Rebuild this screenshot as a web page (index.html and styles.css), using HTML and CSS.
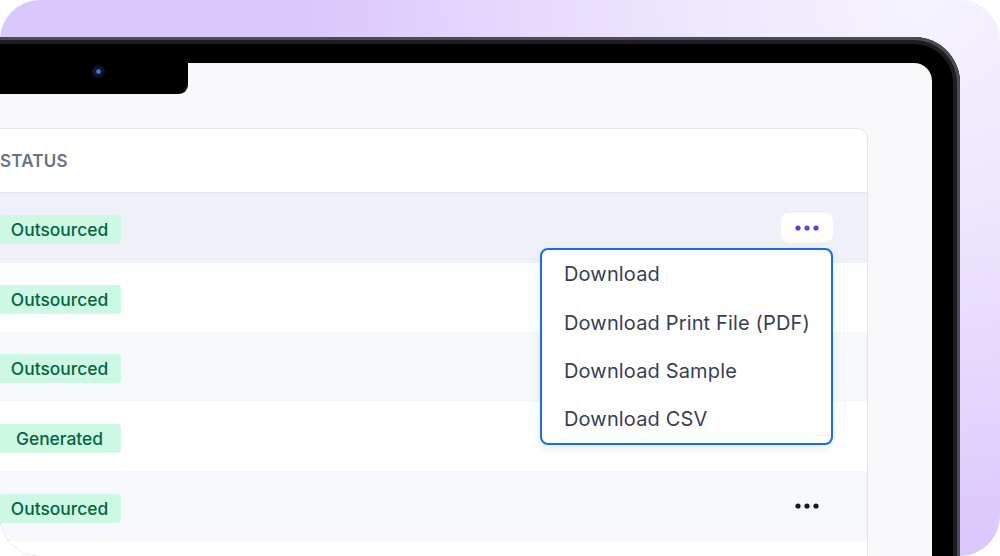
FILE: index.html
```html
<!DOCTYPE html>
<html lang="en">
<head>
<meta charset="utf-8">
<title>Table actions</title>
<link rel="stylesheet" href="styles.css">
</head>
<body>
<div class="stage">
  <div class="device">
    <div class="screen">
      <div class="notch"><span class="camera"></span></div>
      <div class="card">
        <div class="thead"><span class="th">Status</span></div>
        <div class="row row-hover">
          <span class="badge">Outsourced</span>
          <div class="actions">
            <button class="more more-active" type="button" aria-label="More">
              <svg width="24" height="6" viewBox="0 0 24 6"><circle cx="3" cy="3" r="2.6"/><circle cx="12" cy="3" r="2.6"/><circle cx="21" cy="3" r="2.6"/></svg>
            </button>
            <ul class="menu">
              <li class="menu-item">Download</li>
              <li class="menu-item">Download Print File (PDF)</li>
              <li class="menu-item">Download Sample</li>
              <li class="menu-item">Download CSV</li>
            </ul>
          </div>
        </div>
        <div class="row">
          <span class="badge">Outsourced</span>
        </div>
        <div class="row row-striped">
          <span class="badge">Outsourced</span>
        </div>
        <div class="row">
          <span class="badge">Generated</span>
        </div>
        <div class="row row-striped">
          <span class="badge">Outsourced</span>
          <div class="actions">
            <button class="more" type="button" aria-label="More">
              <svg width="24" height="6" viewBox="0 0 24 6"><circle cx="3" cy="3" r="2.6"/><circle cx="12" cy="3" r="2.6"/><circle cx="21" cy="3" r="2.6"/></svg>
            </button>
          </div>
        </div>
        <div class="row"></div>
      </div>
    </div>
  </div>
</div>
</body>
</html>
```

FILE: styles.css
```css
* { box-sizing: border-box; }
html, body {
  margin: 0;
  padding: 0;
  background: #ffffff;
  width: 1000px;
  height: 556px;
  overflow: hidden;
  font-family: "Inter", "Liberation Sans", sans-serif;
}
.stage {
  width: 1000px;
  height: 556px;
  border-radius: 40px;
  overflow: hidden;
  padding-top: 37px;
  background:
    radial-gradient(ellipse 620px 560px at 92% 0%, #f6f3ff 0%, rgba(246, 243, 255, 0.75) 35%, rgba(246, 243, 255, 0) 100%),
    #dac7fb;
}
.device {
  margin-left: -200px;
  width: 1160px;
  height: 720px;
  border-radius: 46px;
  background: #000;
  box-shadow: inset 0 0 0 3px #4d4a53, inset 0 0 0 7px #1d1c20;
  padding: 26px 28px 0 26px;
}
.screen {
  position: relative;
  height: 100%;
  border-radius: 18px;
  background: #f8f8fa;
  padding: 65px 64px 0 114px;
}
.notch {
  position: absolute;
  left: 0;
  top: 0;
  width: 362px;
  height: 31px;
  background: #000;
  border-radius: 0 0 9px 9px;
}
.camera {
  position: absolute;
  left: 266px;
  top: 2px;
  width: 13px;
  height: 13px;
  border-radius: 50%;
  background: radial-gradient(circle, #3f78dc 0 1.8px, #101630 2.8px, #0a0c1a 100%);
}
.card {
  background: #ffffff;
  border: 1px solid #e3e5ea;
  border-radius: 11px;
}
.thead {
  height: 64px;
  display: flex;
  align-items: center;
  padding-left: 59px;
  border-bottom: 1px solid #e3e5ea;
}
.th {
  text-transform: uppercase;
  font-size: 17px;
  font-weight: 600;
  color: #6b7280;
  letter-spacing: 0.2px;
}
.row {
  position: relative;
  height: 69.6px;
  display: flex;
  align-items: center;
  justify-content: space-between;
  padding: 0 34px 0 57px;
  background: #ffffff;
}
.row-hover { background: #eef1f8; }
.row-striped { background: #f7f8fb; }
.badge {
  display: inline-flex;
  align-items: center;
  justify-content: center;
  width: 123px;
  height: 29px;
  margin-top: 4px;
  border-radius: 4px;
  background: #cdf9e4;
  color: #046541;
  font-size: 17.4px;
  font-weight: 500;
}
.actions {
  position: relative;
}
.more {
  display: flex;
  align-items: center;
  justify-content: center;
  width: 52px;
  height: 29px;
  border: 0;
  border-radius: 8px;
  background: transparent;
  padding: 0;
  fill: #111827;
}
.more-active {
  background: #ffffff;
  fill: #4f46e5;
}
.menu {
  position: absolute;
  right: 0;
  top: 35px;
  width: 293px;
  margin: 0;
  padding: 0;
  list-style: none;
  background: #ffffff;
  border: 2px solid #1a6fe0;
  border-radius: 8px;
  box-shadow: 0 4px 10px rgba(17, 24, 39, 0.08);
  z-index: 5;
}
.menu-item {
  height: 48.3px;
  display: flex;
  align-items: center;
  padding-left: 22px;
  font-size: 20px;
  letter-spacing: 0.15px;
  color: #374151;
  white-space: nowrap;
}
```
